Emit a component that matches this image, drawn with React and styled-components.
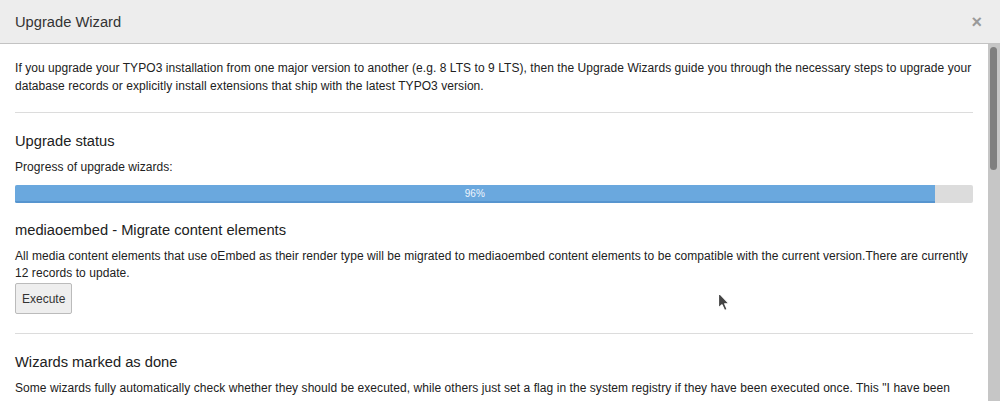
import React from "react";
import styled, { createGlobalStyle } from "styled-components";

const GlobalStyle = createGlobalStyle`
  html, body, #root {
    margin: 0;
    height: 100%;
  }
  *, *::before, *::after {
    box-sizing: border-box;
  }
  body {
    font-family: "Liberation Sans", Arial, sans-serif;
    font-size: 12px;
    letter-spacing: 0.06px;
    color: #212121;
    background: #fff;
  }
`;

const Modal = styled.div`
  display: flex;
  flex-direction: column;
  height: 100vh;
  position: relative;
`;

const Header = styled.div`
  flex: 0 0 auto;
  height: 44px;
  display: flex;
  align-items: center;
  justify-content: space-between;
  padding: 0 15px;
  background: #ededed;
  border-bottom: 1px solid #c3c3c3;
`;

const Title = styled.h4`
  margin: 0;
  font-size: 14.7px;
  font-weight: normal;
  letter-spacing: 0;
  color: #333;
`;

const Close = styled.button`
  border: 0;
  background: none;
  padding: 0;
  margin-right: 3px;
  font-family: "Liberation Sans", Arial, sans-serif;
  font-size: 18px;
  font-weight: bold;
  line-height: 1;
  color: #9a9a9a;
  cursor: pointer;
`;

const Frame = styled.div`
  flex: 1 1 auto;
  display: flex;
  min-height: 0;
`;

const Body = styled.div`
  flex: 1 1 auto;
  min-width: 0;
  overflow: hidden;
  padding: 15px 15px;
`;

const ScrollTrack = styled.div`
  flex: 0 0 12px;
  background: #c6c6c6;
  padding: 3px 3px 0 2px;
`;

const ScrollThumb = styled.div`
  height: 123px;
  background: #7f7f7f;
  border-radius: 4px;
`;

const Text = styled.p`
  margin: 0;
  line-height: ${(p) => p.lh || 18}px;
`;

const Divider = styled.hr`
  border: 0;
  border-top: 1px solid #dcdcdc;
  margin: ${(p) => p.top || 17}px 0 0;
`;

const Heading = styled.h3`
  margin: ${(p) => p.top || 18}px 0 0;
  font-size: 14.7px;
  font-weight: normal;
  letter-spacing: 0;
  line-height: 20px;
  color: #212121;
`;

const Label = styled.p`
  margin: 7px 0 0;
  line-height: 18px;
`;

const Progress = styled.div`
  margin-top: 9px;
  height: 18px;
  background: #dcdcdc;
  border-radius: 2px;
  overflow: hidden;
  display: flex;
`;

const Bar = styled.div`
  background: #6aa8de;
  box-shadow: inset 0 -2px 0 #5795cf;
  color: #eef5fc;
  font-size: 10px;
  letter-spacing: 0;
  line-height: 18px;
  text-align: center;
`;

const Section = styled.div`
  margin-top: 8px;
`;

const ExecuteButton = styled.button`
  display: block;
  margin-top: 1px;
  height: 31px;
  padding: 0 6px;
  font-family: "Liberation Sans", Arial, sans-serif;
  font-size: 12px;
  color: #333;
  background: #eeeeee;
  border: 1px solid #bbbbbb;
  border-radius: 2px;
  cursor: pointer;
`;

const Cursor = styled.svg`
  position: absolute;
  left: 717px;
  top: 291px;
  pointer-events: none;
`;

const App = () => {
  const percent = 96;
  return (
    <Modal>
      <GlobalStyle />
      <Header>
        <Title>Upgrade Wizard</Title>
        <Close aria-label="close">×</Close>
      </Header>
      <Frame>
        <Body>
          <Text>
            If you upgrade your TYPO3 installation from one major version to
            another (e.g. 8 LTS to 9 LTS), then the Upgrade Wizards guide you
            through the necessary steps to upgrade your database records or
            explicitly install extensions that ship with the latest TYPO3
            version.
          </Text>
          <Divider />
          <Heading top={18}>Upgrade status</Heading>
          <Label>Progress of upgrade wizards:</Label>
          <Progress>
            <Bar style={{ width: `${percent}%` }}>{percent}%</Bar>
          </Progress>
          <Heading top={17}>mediaoembed - Migrate content elements</Heading>
          <Section>
            <Text lh={17}>
              All media content elements that use oEmbed as their render type
              will be migrated to mediaoembed content elements to be
              compatible with the current version.There are currently 12
              records to update.
            </Text>
            <ExecuteButton>Execute</ExecuteButton>
          </Section>
          <Divider top={19} />
          <Heading>Wizards marked as done</Heading>
          <Label>
            Some wizards fully automatically check whether they should be
            executed, while others just set a flag in the system registry if
            they have been executed once. This "I have been executed"-flag
            can be reset by marking a specific wizard as undone, which is
            useful if the wizard has to be executed again.
          </Label>
        </Body>
        <ScrollTrack>
          <ScrollThumb />
        </ScrollTrack>
      </Frame>
      <Cursor width="14" height="22" viewBox="0 0 14 22">
        <path
          d="M1.5 1.5 L1.5 17 L5 13.8 L7.6 19.6 L10.2 18.4 L7.7 12.8 L12.2 12.8 Z"
          fill="#444"
          stroke="#fff"
          strokeWidth="1.2"
          strokeLinejoin="round"
        />
      </Cursor>
    </Modal>
  );
};

export default App;
